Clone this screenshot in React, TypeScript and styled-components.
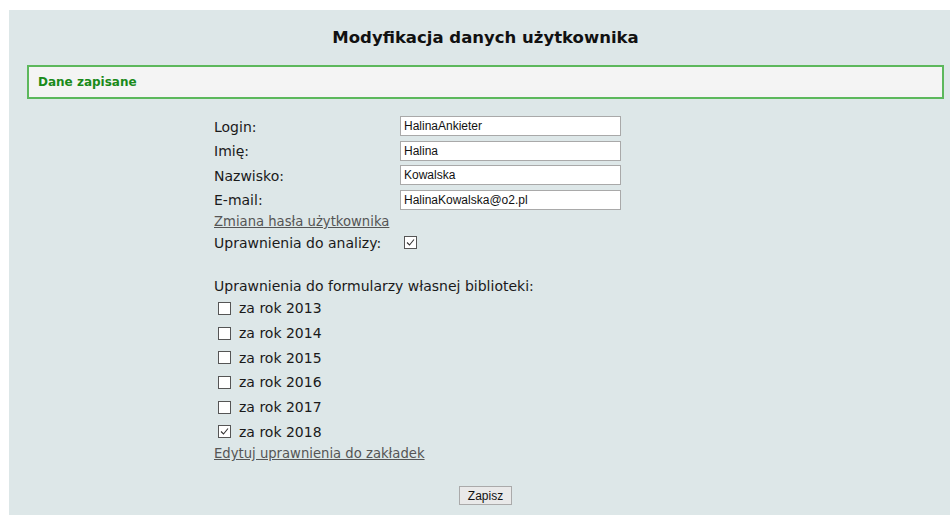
import { useState } from 'react';
import styled, { createGlobalStyle } from 'styled-components';

const GlobalStyle = createGlobalStyle`
  html, body {
    margin: 0;
    padding: 0;
    background: #ffffff;
    overflow: hidden;
  }
`;

const years = [2013, 2014, 2015, 2016, 2017, 2018];

const Checkbox = ({ checked, onToggle }: { checked: boolean; onToggle: () => void }) => (
  <Box onClick={onToggle}>
    {checked && (
      <svg width="11" height="11" viewBox="0 0 11 11">
        <path d="M2 5.5 L4.5 8 L9 2.5" fill="none" stroke="#333" strokeWidth="1.1" />
      </svg>
    )}
  </Box>
);

const App = () => {
  const [analysis, setAnalysis] = useState(true);
  const [allowed, setAllowed] = useState<Record<number, boolean>>({ 2018: true });

  return (
    <>
      <GlobalStyle />
      <Panel>
        <Title>Modyfikacja danych użytkownika</Title>
        <Message>Dane zapisane</Message>
        <Form>
          <FieldRow>
            <Label>Login:</Label>
            <Input defaultValue="HalinaAnkieter" />
          </FieldRow>
          <FieldRow>
            <Label>Imię:</Label>
            <Input defaultValue="Halina" />
          </FieldRow>
          <FieldRow>
            <Label>Nazwisko:</Label>
            <Input defaultValue="Kowalska" />
          </FieldRow>
          <FieldRow>
            <Label>E-mail:</Label>
            <Input defaultValue="HalinaKowalska@o2.pl" />
          </FieldRow>
          <TextLink href="#">Zmiana hasła użytkownika</TextLink>
          <FieldRow $short>
            <Label>Uprawnienia do analizy:</Label>
            <CheckCell>
              <Checkbox checked={analysis} onToggle={() => setAnalysis(!analysis)} />
            </CheckCell>
          </FieldRow>
          <Heading>Uprawnienia do formularzy własnej biblioteki:</Heading>
          {years.map((y) => (
            <YearRow key={y}>
              <Checkbox
                checked={!!allowed[y]}
                onToggle={() => setAllowed({ ...allowed, [y]: !allowed[y] })}
              />
              <span>za rok {y}</span>
            </YearRow>
          ))}
          <TextLink href="#">Edytuj uprawnienia do zakładek</TextLink>
        </Form>
        <Actions>
          <SaveButton>Zapisz</SaveButton>
        </Actions>
      </Panel>
    </>
  );
};

const Panel = styled.div`
  margin: 10px 0 0 9px;
  width: 953px;
  min-height: 505px;
  background: #dde7e8;
  display: flex;
  flex-direction: column;
  font-family: 'DejaVu Sans', Verdana, sans-serif;
  color: #1a1a1a;
`;

const Title = styled.h1`
  margin: 0;
  padding-top: 18px;
  height: 20px;
  line-height: 20px;
  text-align: center;
  font-size: 16.5px;
  font-weight: bold;
  color: #111;
`;

const Message = styled.div`
  margin: 17px 18px 0;
  height: 30px;
  line-height: 30px;
  padding-left: 9px;
  border: 2px solid #5cb85c;
  background: #f4f4f4;
  color: #1a8a1a;
  font-size: 12px;
  font-weight: bold;
`;

const Form = styled.div`
  display: flex;
  flex-direction: column;
  padding: 15px 0 0 205px;
`;

const FieldRow = styled.div<{ $short?: boolean }>`
  display: grid;
  grid-template-columns: 186px 221px;
  align-items: center;
  height: ${({ $short }) => ($short ? '21px' : '24.5px')};
`;

const Label = styled.span`
  font-size: 14px;
  padding-top: 1px;
`;

const Input = styled.input`
  box-sizing: border-box;
  height: 20px;
  width: 221px;
  margin: 0;
  padding: 0 3px;
  border: 1px solid #a9a9a9;
  background: #fff;
  font-family: 'Liberation Sans', Arial, sans-serif;
  font-size: 12px;
  color: #111;
`;

const CheckCell = styled.div`
  display: flex;
  padding-left: 4px;
`;

const Box = styled.span`
  box-sizing: border-box;
  width: 13px;
  height: 13px;
  border: 1px solid #555;
  background: #fff;
  display: inline-flex;
  align-items: center;
  justify-content: center;
  cursor: pointer;
`;

const TextLink = styled.a`
  display: block;
  height: 20px;
  line-height: 20px;
  font-size: 13.2px;
  color: #555;
  text-decoration: underline;
`;

const Heading = styled.div`
  margin-top: 23px;
  height: 20px;
  line-height: 20px;
  font-size: 14px;
`;

const YearRow = styled.label`
  display: flex;
  align-items: center;
  gap: 8px;
  height: 24.7px;
  padding-left: 4px;
  font-size: 14px;
  cursor: pointer;
`;

const Actions = styled.div`
  display: flex;
  justify-content: center;
  padding-top: 22px;
`;

const SaveButton = styled.button`
  height: 19px;
  padding: 0 8px;
  border: 1px solid #aaa;
  background: #e9e9e9;
  font-family: 'Liberation Sans', Arial, sans-serif;
  font-size: 12px;
  color: #111;
`;

export default App;
